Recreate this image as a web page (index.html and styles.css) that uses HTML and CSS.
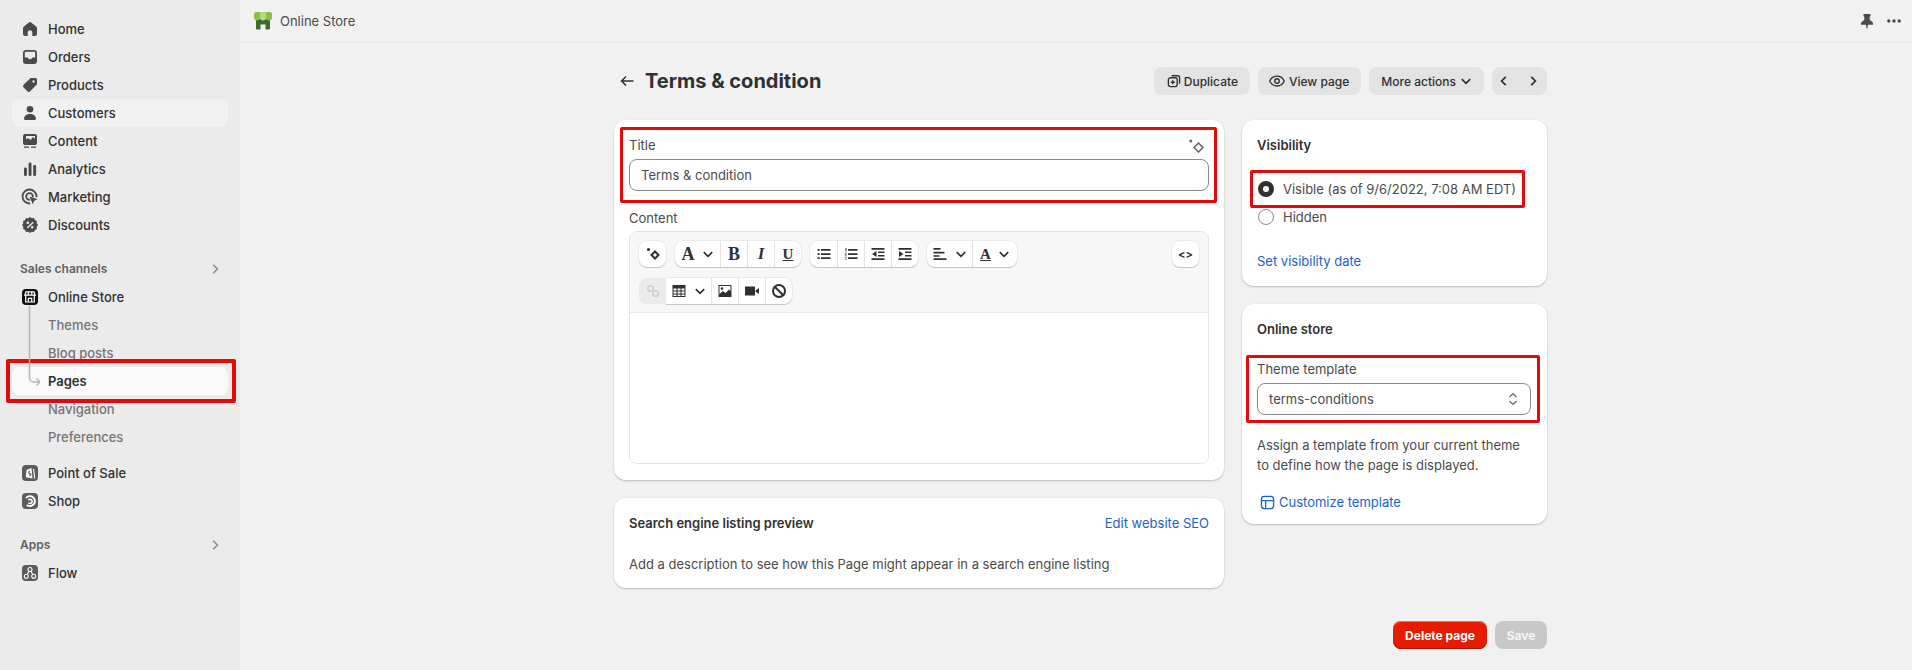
FILE: index.html
```html
<!DOCTYPE html>
<html lang="en">
<head>
    <meta charset="UTF-8">
    <title>Terms &amp; condition</title>
    <link rel="stylesheet" href="styles.css">
</head>
<body>
    <!-- Sidebar -->
    <nav class="sidebar">
        <a class="nav-item"><svg class="icon" viewBox="0 0 20 20"><path d="M9.200 3.300a1.300 1.300 0 0 1 1.600 0l5 3.900c.7.500 1.200 1.300 1.200 2.200v5.100a2.500 2.500 0 0 1-2.500 2.500h-2.200v-3.500a2.300 2.300 0 0 0-4.600 0V17H5.500A2.500 2.500 0 0 1 3 14.500V9.400c0-.9.500-1.700 1.200-2.200z"/></svg>Home</a>
        <a class="nav-item"><svg class="icon" viewBox="0 0 20 20"><path fill-rule="evenodd" d="M6 3h8a3 3 0 0 1 3 3v8a3 3 0 0 1-3 3H6a3 3 0 0 1-3-3V6a3 3 0 0 1 3-3zm0 1.800A1.200 1.200 0 0 0 4.800 6v4.500h2.400c.5 0 .8.300 1 .7.300.7 1 1.100 1.800 1.100s1.500-.4 1.800-1.100c.2-.4.500-.7 1-.7h2.400V6A1.200 1.200 0 0 0 14 4.800z"/></svg>Orders</a>
        <a class="nav-item"><svg class="icon" viewBox="0 0 20 20"><path fill-rule="evenodd" d="M11.300 3h4.200A1.500 1.500 0 0 1 17 4.500v4.200c0 .4-.2.800-.4 1.100l-6.400 6.500a2 2 0 0 1-2.800 0l-3.800-3.800a2 2 0 0 1 0-2.800l6.500-6.300c.3-.3.700-.4 1.100-.4zm2.200 2.300a1.200 1.200 0 1 0 0 2.400 1.200 1.200 0 0 0 0-2.400z"/></svg>Products</a>
        <a class="nav-item hovered"><svg class="icon" viewBox="0 0 20 20"><circle cx="10" cy="6.300" r="3.300"/><path d="M10 11c-3.500 0-5.800 1.900-6 4.600-.1.800.5 1.400 1.300 1.400h9.400c.8 0 1.400-.6 1.300-1.400-.2-2.700-2.500-4.600-6-4.600z"/></svg>Customers</a>
        <a class="nav-item"><svg class="icon" viewBox="0 0 20 20"><path fill-rule="evenodd" d="M5 3h10a2 2 0 0 1 2 2v7a2 2 0 0 1-2 2H5a2 2 0 0 1-2-2V5a2 2 0 0 1 2-2zm1 2v3.500l2-1.500 2.500 2L13 6l2 2V5z"/><path d="M4 15.500h5v1.300H4zM11 15.500h5v1.300h-5z"/></svg>Content</a>
        <a class="nav-item"><svg class="icon" viewBox="0 0 20 20"><rect x="4" y="8.500" width="2.900" height="8.500" rx="1.300"/><rect x="8.600" y="3.500" width="2.900" height="13.500" rx="1.300"/><rect x="13.200" y="6" width="2.900" height="11" rx="1.300"/></svg>Analytics</a>
        <a class="nav-item"><svg class="icon" viewBox="0 0 20 20"><path d="M9.500 16.500a7 7 0 1 1 7-7" fill="none" stroke="#4a4a4a" stroke-width="1.800" stroke-linecap="round"/><path d="M9.500 12.800a3.300 3.300 0 1 1 3.300-3.300" fill="none" stroke="#4a4a4a" stroke-width="1.800" stroke-linecap="round"/><path d="M9.500 9.500l8 2.800-3.300 1.400-1.400 3.600z"/></svg>Marketing</a>
        <a class="nav-item"><svg class="icon" viewBox="0 0 20 20"><path fill-rule="evenodd" d="M10 2l1.800 1.300 2.200-.2.900 2 2 .9-.2 2.200L18 10l-1.300 1.800.2 2.200-2 .9-.9 2-2.200-.2L10 18l-1.800-1.300-2.200.2-.9-2-2-.9.2-2.200L2 10l1.300-1.800L3.100 6l2-.9.9-2 2.200.2zm2.800 4.800l-6 5.400 1 1 6-5.400zM7.800 6.500a1.300 1.300 0 1 0 0 2.600 1.300 1.300 0 0 0 0-2.600zm4.400 4.500a1.300 1.300 0 1 0 0 2.600 1.300 1.300 0 0 0 0-2.600z"/></svg>Discounts</a>

        <div class="nav-heading">Sales channels <svg class="chevron" viewBox="0 0 10 10"><path d="M3.500 1.500L7 5 3.500 8.500"/></svg></div>
        <a class="nav-item"><span class="app-icon black"><svg viewBox="0 0 16 16"><path d="M4 2.800h8l1.200 3.400H2.800zM3.700 6.200V13h8.600V6.200M6.300 13V9.300h3.400V13M6.500 2.800L6 6.200M9.500 2.800l.5 3.400" fill="none" stroke="#fff" stroke-width="1.200"/></svg></span>Online Store</a>
        <div class="subnav">
            <svg class="tree" viewBox="0 0 20 90"><path d="M9.500 0V72a4 4 0 0 0 4 4H20M16.500 72.500L20 76l-3.500 3.500"/></svg>
            <a class="nav-item sub">Themes</a>
            <a class="nav-item sub">Blog posts</a>
            <a class="nav-item sub active marked mark-pages">Pages</a>
            <a class="nav-item sub">Navigation</a>
            <a class="nav-item sub">Preferences</a>
        </div>
        <a class="nav-item group-gap"><span class="app-icon"><svg viewBox="0 0 16 16"><path d="M4.500 5L9.500 3 10.500 13.500 3.800 12.300z" fill="#fff"/><path d="M11.500 4L12.800 13.300" stroke="#fff" fill="none" stroke-width="1.100"/><path d="M8 6.300c-1.700 0-1.700 2 0 2.300s1 2.200-1 1.500" stroke="#5c5c5c" fill="none" stroke-width="1.100"/></svg></span>Point of Sale</a>
        <a class="nav-item"><span class="app-icon"><svg viewBox="0 0 16 16"><path d="M4 5A5 5 0 1 1 4.800 12" fill="none" stroke="#fff" stroke-width="1.900"/><path d="M6.300 7.200A2.100 2.100 0 1 1 6.300 9.600" fill="none" stroke="#fff" stroke-width="1.600"/></svg></span>Shop</a>

        <div class="nav-heading">Apps <svg class="chevron" viewBox="0 0 10 10"><path d="M3.500 1.500L7 5 3.500 8.500"/></svg></div>
        <a class="nav-item"><span class="app-icon"><svg viewBox="0 0 16 16"><g fill="none" stroke="#fff" stroke-width="1.100"><circle cx="8" cy="4.500" r="2"/><circle cx="4.300" cy="11.300" r="2"/><circle cx="11.700" cy="11.300" r="2"/><path d="M7 6.300L5.300 9.500M9 6.300l1.700 3.200"/></g></svg></span>Flow</a>
    </nav>

    <div class="main">
        <header class="topbar">
            <svg class="store-logo" viewBox="0 0 20 20"><path d="M3 8h14v9.500a1 1 0 0 1-1 1h-3.500v-5h-5v5H4a1 1 0 0 1-1-1z" fill="#3e6b2c"/><path d="M3.500 1h3.500v5.500a3 3 0 0 1-6 0V3.500A2.500 2.500 0 0 1 3.500 1zM13 1h3.500A2.500 2.500 0 0 1 19 3.500v3a3 3 0 0 1-6 0z" fill="#8cbd45"/><path d="M7 1h6v5.500a3 3 0 0 1-6 0z" fill="#b5d77f"/></svg>
            <span class="store-name">Online Store</span>
            <span class="topbar-right">
                <svg class="icon" viewBox="0 0 20 20"><path d="M6.500 3h7v2l-.8.7v3l3.300 3v2H11l-.7 4h-.6L9 13.700H4v-2l3.300-3v-3L6.500 5z"/></svg>
                <svg class="icon dots" viewBox="0 0 14 14"><circle cx="1.800" cy="7" r="1.700"/><circle cx="7" cy="7" r="1.700"/><circle cx="12.200" cy="7" r="1.700"/></svg>
            </span>
        </header>

        <div class="page">
            <div class="page-header">
                <svg class="back" viewBox="0 0 16 16"><path d="M14.500 8H2.500M7 3.500L2.500 8 7 12.500"/></svg>
                <h1>Terms &amp; condition</h1>
                <div class="actions">
                    <button class="btn"><svg class="icon btn-icon" viewBox="0 0 20 20"><g fill="none" stroke="#303030" stroke-width="1.700"><rect x="3" y="6" width="11" height="11" rx="2.500"/><path d="M7 3.500h7.500A2.500 2.500 0 0 1 17 6v7.500M8.500 9v5M6 11.500h5"/></g></svg>Duplicate</button>
                    <button class="btn"><svg class="icon btn-icon eye" viewBox="0 0 20 20"><g fill="none" stroke="#303030" stroke-width="1.500"><path d="M2 10c1.500-3.500 4.500-5.500 8-5.500s6.500 2 8 5.500c-1.500 3.500-4.500 5.500-8 5.500S3.500 13.500 2 10z"/><circle cx="10" cy="10" r="2.500"/></g></svg>View page</button>
                    <button class="btn">More actions<svg class="caret" viewBox="0 0 10 10"><path d="M1.500 3.500L5 7l3.500-3.500"/></svg></button>
                    <div class="btn pager">
                        <svg class="caret" viewBox="0 0 10 10"><path d="M6.500 1.500L3 5l3.500 3.500"/></svg>
                        <svg class="caret" viewBox="0 0 10 10"><path d="M3.500 1.500L7 5 3.500 8.500"/></svg>
                    </div>
                </div>
            </div>

            <div class="columns">
                <div class="col">
                    <section class="card card-left">
                        <div class="marked mark-title">
                            <div class="label-row">
                                <label>Title</label>
                                <svg class="sparkle" viewBox="0 0 16 16"><path d="M10.500 5L15 9.500 10.500 14 6 9.500z" fill="none" stroke="#616161" stroke-width="1.500"/><circle cx="2.800" cy="3" r="1.500" fill="#616161"/></svg>
                            </div>
                            <div class="input">Terms &amp; condition</div>
                        </div>
                        <label class="content-label">Content</label>
                        <div class="editor">
                            <div class="toolbar">
                                <div class="tool-row">
                                    <div class="tool-group"><span class="tool"><svg class="tool-icon" viewBox="0 0 16 16"><path d="M10 5.500L13.500 9 10 12.500 6.500 9z" fill="none" stroke="#303030" stroke-width="2"/><circle cx="3.500" cy="3.500" r="1.600" fill="#303030"/></svg></span></div>
                                    <div class="tool-group">
                                        <span class="tool wide serif">A<svg class="caret" viewBox="0 0 10 10"><path d="M1.500 3.500L5 7l3.500-3.500"/></svg></span>
                                        <span class="tool serif">B</span>
                                        <span class="tool serif italic">I</span>
                                        <span class="tool serif under">U</span>
                                    </div>
                                    <div class="tool-group">
                                        <span class="tool"><svg class="tool-icon" viewBox="0 0 16 16"><path d="M5 3h9.500v1.700H5zM5 7.200h9.500v1.700H5zM5 11.300h9.500V13H5zM1.500 3h2.200v1.700H1.500zM1.500 7.200h2.200v1.700H1.500zM1.500 11.300h2.200V13H1.500z"/></svg></span>
                                        <span class="tool"><svg class="tool-icon" viewBox="0 0 16 16"><path d="M5 3h9.500v1.700H5zM5 7.200h9.500v1.700H5zM5 11.300h9.500V13H5zM2.500 2h1v3.200h-1zM1.800 6.800h1.900v.8H1.800zM1.800 8.600h1.900v.8H1.800zM1.800 10.700h1.900v.7H1.800zM1.800 12.700h1.900v.7H1.800z"/></svg></span>
                                        <span class="tool"><svg class="tool-icon" viewBox="0 0 16 16"><path d="M1.500 2h13v1.700h-13zM8 5.600h6.500v1.500H8zM8 8.900h6.500v1.500H8zM1.500 12.300h13V14h-13zM6.500 5v6L2 8z"/></svg></span>
                                        <span class="tool"><svg class="tool-icon" viewBox="0 0 16 16"><path d="M1.500 2h13v1.700h-13zM8 5.600h6.500v1.500H8zM8 8.900h6.500v1.500H8zM1.500 12.300h13V14h-13zM2 5v6l4.500-3z"/></svg></span>
                                    </div>
                                    <div class="tool-group">
                                        <span class="tool wide"><svg class="tool-icon" viewBox="0 0 16 16"><path d="M1.500 2h7v1.700h-7zM1.500 5.800h11v1.600h-11zM1.500 9.300h6v1.500h-6zM1.500 12.300h13V14h-13z"/></svg><svg class="caret" viewBox="0 0 10 10"><path d="M1.500 3.500L5 7l3.500-3.500"/></svg></span>
                                        <span class="tool wide serif color-a">A<svg class="caret" viewBox="0 0 10 10"><path d="M1.500 3.500L5 7l3.500-3.500"/></svg></span>
                                    </div>
                                    <div class="tool-group push-right"><span class="tool code">&lt;&gt;</span></div>
                                </div>
                                <div class="tool-row">
                                    <span class="tool disabled"><svg class="tool-icon" viewBox="0 0 16 16"><g fill="none" stroke="#cfcfcf" stroke-width="1.500"><circle cx="5.500" cy="5.500" r="2.800"/><circle cx="10.500" cy="10.500" r="2.800"/></g></svg></span>
                                    <div class="tool-group after-disabled">
                                        <span class="tool wide"><svg class="tool-icon" viewBox="0 0 16 16"><path d="M1.500 2h13v12h-13z M2.500 5.500v2h3v-2zM6.500 5.500v2h3v-2zM10.500 5.500v2h3v-2zM2.500 8.500v2h3v-2zM6.500 8.500v2h3v-2zM10.500 8.500v2h3v-2zM2.500 11.500V13h3v-1.500zM6.500 11.500V13h3v-1.500zM10.500 11.500V13h3v-1.500z" fill-rule="evenodd"/></svg><svg class="caret" viewBox="0 0 10 10"><path d="M1.500 3.500L5 7l3.500-3.500"/></svg></span>
                                        <span class="tool"><svg class="tool-icon" viewBox="0 0 16 16"><path fill-rule="evenodd" d="M1.500 2h13v12h-13zM2.500 3v8l3.500-3 2.500 2L12 6.500l1.500 1.500V3zM5 4.300a1.300 1.300 0 1 1 0 2.600 1.300 1.300 0 0 1 0-2.600z"/></svg></span>
                                        <span class="tool"><svg class="tool-icon" viewBox="0 0 16 16"><path d="M1 3.500h10v9H1zM11.500 7.500L15 5v6l-3.500-2.500z"/></svg></span>
                                        <span class="tool"><svg class="tool-icon" viewBox="0 0 16 16"><circle cx="8" cy="8" r="6" fill="none" stroke="#303030" stroke-width="2"/><path d="M3.800 3.800l8.400 8.400" stroke="#303030" stroke-width="2"/></svg></span>
                                    </div>
                                </div>
                            </div>
                            <div class="editor-body"></div>
                        </div>
                    </section>

                    <section class="card card-left seo">
                        <div class="seo-head">
                            <h2>Search engine listing preview</h2>
                            <a class="link">Edit website SEO</a>
                        </div>
                        <p>Add a description to see how this Page might appear in a search engine listing</p>
                    </section>
                </div>

                <div class="col">
                    <section class="card visibility">
                        <h2>Visibility</h2>
                        <div class="radio-row marked mark-visible"><span class="radio checked"></span>Visible (as of 9/6/2022, 7:08 AM EDT)</div>
                        <div class="radio-row"><span class="radio"></span>Hidden</div>
                        <a class="link set-date">Set visibility date</a>
                    </section>

                    <section class="card store-card">
                        <h2>Online store</h2>
                        <div class="marked mark-theme">
                            <label class="theme-label">Theme template</label>
                            <div class="select">terms-conditions
                                <svg class="updown" viewBox="0 0 12 16"><path d="M2.500 6L6 2.500 9.500 6M2.500 10L6 13.500 9.500 10"/></svg>
                            </div>
                        </div>
                        <p class="help">Assign a template from your current theme to define how the page is displayed.</p>
                        <a class="link customize"><svg class="link-icon" viewBox="0 0 16 16"><g fill="none" stroke="#1a62c9" stroke-width="1.400"><rect x="1.500" y="1.500" width="13" height="13" rx="3"/><path d="M1.500 6h13M6 6v8.500"/></g></svg>Customize template</a>
                    </section>
                </div>
            </div>

            <div class="footer-actions">
                <button class="btn-danger">Delete page</button>
                <button class="btn-save">Save</button>
            </div>
        </div>
    </div>
</body>
</html>
```

FILE: styles.css
```css
* {
    box-sizing: border-box;
}

body {
    display: flex;
    height: 100vh;
    margin: 0;
    overflow: hidden;
    background: #f1f1f1;
    color: #303030;
    font-family: Inter, "Liberation Sans", sans-serif;
    font-size: 13px;
    line-height: 18px;
}

/* red marks over the screenshot */
.marked {
    position: relative;
}

.marked::after {
    content: "";
    position: absolute;
    border: 3px solid #e20a0a;
    border-radius: 2px;
    pointer-events: none;
}

.mark-pages::after {
    inset: -8px -8px -8px -6px;
    border-width: 4px;
}

.mark-title::after {
    inset: -9px -8px -12px -9px;
}

.mark-visible::after {
    inset: -5px 6px -5px -7px;
}

.mark-theme::after {
    inset: -5px -9px -8px -11px;
}

/* sidebar */
.sidebar {
    flex: 0 0 240px;
    padding: 15px 12px;
    background: #ebebeb;
}

.nav-item {
    display: flex;
    align-items: center;
    gap: 8px;
    height: 28px;
    padding-left: 8px;
    border-radius: 8px;
    font-weight: 500;
    color: #303030;
}

.nav-item.hovered {
    background: #f1f1f1;
}

.nav-item.sub {
    padding-left: 36px;
    color: #757575;
}

.nav-item.active {
    background: #fafafa;
    color: #303030;
    font-weight: 600;
}

.group-gap {
    margin-top: 8px;
}

.icon {
    flex: none;
    width: 20px;
    height: 20px;
    fill: #4a4a4a;
}

.nav-heading {
    display: flex;
    align-items: center;
    justify-content: space-between;
    height: 28px;
    margin-top: 16px;
    padding: 0 7px 0 8px;
    font-size: 12px;
    font-weight: 600;
    color: #616161;
}

.chevron {
    width: 12px;
    height: 12px;
    fill: none;
    stroke: #8a8a8a;
    stroke-width: 1.2;
}

.app-icon {
    display: flex;
    flex: none;
    width: 16px;
    height: 16px;
    margin: 0 2px;
    border-radius: 4px;
    background: #5c5c5c;
}

.app-icon.black {
    background: #111;
}

.subnav {
    position: relative;
}

.tree {
    position: absolute;
    top: -5px;
    left: 8px;
    z-index: 1;
    width: 20px;
    height: 90px;
    fill: none;
    stroke: #b5b5b5;
    stroke-width: 1.500;
}

/* main */
.main {
    flex: 1;
}

.topbar {
    display: flex;
    align-items: center;
    height: 43px;
    padding: 0 11px 0 13px;
    border-bottom: 1px solid #e8e8e8;
}

.store-logo {
    width: 20px;
    height: 20px;
}

.store-name {
    margin-left: 7px;
    font-size: 13px;
    color: #4a4a4a;
}

.topbar-right {
    display: flex;
    align-items: center;
    gap: 10px;
    margin-left: auto;
}

.dots {
    width: 14px;
    height: 14px;
}

.page {
    width: 933px;
    margin-left: 374px;
    padding-top: 24px;
}

.page-header {
    display: flex;
    align-items: center;
    height: 28px;
    margin-bottom: 25px;
}

.back {
    width: 16px;
    height: 16px;
    margin-left: 5px;
    fill: none;
    stroke: #303030;
    stroke-width: 1.500;
}

h1 {
    margin: 0 0 0 10px;
    font-size: 20px;
    font-weight: 700;
    line-height: 28px;
}

.actions {
    display: flex;
    gap: 8px;
    margin-left: auto;
}

.btn {
    display: flex;
    align-items: center;
    height: 28px;
    padding: 0 12px;
    border: 0;
    border-radius: 8px;
    background: #e3e3e3;
    color: #303030;
    font-family: inherit;
    font-size: 12px;
    font-weight: 450;
}

.btn-icon {
    width: 16px;
    height: 16px;
    margin-right: 2px;
}

.eye {
    width: 18px;
    height: 18px;
    margin-left: -2px;
    margin-right: 3px;
}

.caret {
    width: 12px;
    height: 12px;
    fill: none;
    stroke: #303030;
    stroke-width: 1.400;
}

.btn .caret {
    margin-left: 4px;
}

.pager {
    gap: 17px;
    padding: 0 8px 0 6px;
}

.pager .caret {
    margin-left: 0;
}

.columns {
    display: grid;
    grid-template-columns: 610px 305px;
    gap: 18px;
}

.col {
    display: flex;
    flex-direction: column;
    gap: 18px;
}

.card {
    padding: 16px 16px 16px 15px;
    border-radius: 12px;
    background: #fff;
    box-shadow: 0 1px 2px rgba(0, 0, 0, .22), 0 0 1px rgba(0, 0, 0, .08);
}

.card-left {
    padding: 16px 15px;
}

h2 {
    margin: 0;
    font-size: 13px;
    font-weight: 600;
    line-height: 18px;
}

.label-row {
    display: flex;
    align-items: center;
    justify-content: space-between;
    height: 18px;
    margin-bottom: 5px;
}

label {
    display: block;
    color: #4a4a4a;
}

.sparkle {
    width: 16px;
    height: 16px;
    margin-top: 1px;
    margin-right: 5px;
}

.input {
    display: flex;
    align-items: center;
    height: 32px;
    padding: 0 11px;
    border: 1px solid #8a8a8a;
    border-radius: 8px;
    color: #4a4a4a;
}

.content-label {
    margin-top: 18px;
    margin-bottom: 4px;
}

.editor {
    border: 1px solid #e3e3e3;
    border-radius: 8px;
    overflow: hidden;
}

.toolbar {
    display: flex;
    flex-direction: column;
    gap: 11px;
    padding: 9px 9px 8px;
    border-bottom: 1px solid #ebebeb;
    background: #f7f7f7;
}

.tool-row {
    display: flex;
    gap: 9px;
}

.tool-row + .tool-row {
    gap: 0;
}

.tool-group {
    display: flex;
    height: 26px;
    border-radius: 8px;
    background: #fff;
    box-shadow: 0 1px 0 #c4c4c4, 0 0 0 1px #ebebeb;
}

.tool {
    display: flex;
    align-items: center;
    justify-content: center;
    width: 27px;
    height: 26px;
    border-left: 1px solid #e3e3e3;
    font-size: 15px;
}

.tool:first-child {
    border-left: 0;
}

.tool.wide {
    gap: 7px;
    width: 45px;
}

.tool-icon {
    width: 16px;
    height: 16px;
    fill: #303030;
}

.serif {
    font-family: "Liberation Serif", serif;
    font-size: 18px;
    font-weight: 700;
}

.italic {
    font-size: 17px;
    font-style: italic;
}

.under {
    text-decoration: underline;
    font-size: 15px;
}

.color-a {
    font-size: 15px;
    text-decoration: underline;
}

.code {
    font-size: 11px;
    font-weight: 700;
}

.push-right {
    margin-left: auto;
}

.tool.disabled {
    border-radius: 8px 0 0 8px;
    background: #ebebeb;
}

.after-disabled {
    border-radius: 0 8px 8px 0;
}

.editor-body {
    height: 150px;
    background: #fff;
}

.seo {
    height: 90px;
}

.seo-head {
    display: flex;
    justify-content: space-between;
    margin-bottom: 23px;
}

.link {
    color: #1a62c9;
}

.seo p {
    margin: 0;
    color: #4a4a4a;
}

.radio-row {
    display: flex;
    align-items: center;
    gap: 9px;
    height: 28px;
    color: #4a4a4a;
}

h2 + .radio-row {
    margin-top: 21px;
}

.radio {
    flex: none;
    width: 16px;
    height: 16px;
    margin-left: 1px;
    border: 1px solid #8a8a8a;
    border-radius: 50%;
}

.radio.checked {
    border: 5px solid #303030;
}

.set-date {
    display: block;
    margin-top: 21px;
}

.store-card {
    padding-bottom: 13px;
}

.store-card h2 {
    margin-bottom: 22px;
}

.theme-label {
    margin-bottom: 5px;
}

.select {
    display: flex;
    align-items: center;
    justify-content: space-between;
    height: 32px;
    padding: 0 11px;
    border: 1px solid #8a8a8a;
    border-radius: 8px;
    color: #4a4a4a;
}

.updown {
    width: 12px;
    height: 16px;
    fill: none;
    stroke: #616161;
    stroke-width: 1.100;
}

.help {
    margin: 20px 0 0;
    line-height: 20px;
    color: #4a4a4a;
}

.customize {
    display: flex;
    align-items: center;
    gap: 4px;
    margin-top: 18px;
    padding-left: 3px;
}

.link-icon {
    width: 15px;
    height: 15px;
}

.footer-actions {
    display: flex;
    justify-content: flex-end;
    gap: 8px;
    margin-top: 33px;
}

.btn-danger,
.btn-save {
    height: 28px;
    border: 0;
    border-radius: 8px;
    color: #fff;
    font-family: inherit;
    font-size: 12px;
    font-weight: 700;
}

.btn-danger {
    width: 94px;
    background: #e51c00;
    box-shadow: inset 0 1px 0 #ff6d55, inset 0 -1px 0 #b51500;
}

.btn-save {
    width: 52px;
    background: #c8c8c8;
    color: #f5f5f5;
}
```
